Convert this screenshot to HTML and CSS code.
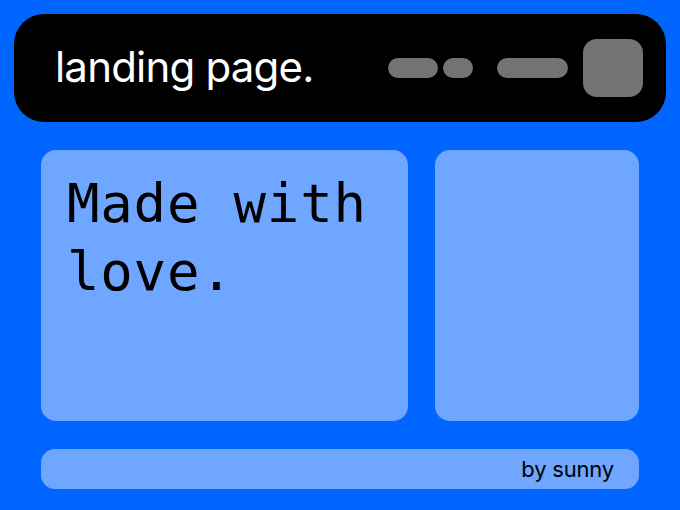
FILE: index.html
```html
<!DOCTYPE html>
<html lang="en">
<head>
<meta charset="utf-8">
<title>landing page.</title>
<link rel="stylesheet" href="styles.css">
</head>
<body>
<div class="page">
  <header class="topbar">
    <div class="brand">landing page.</div>
    <nav class="nav">
      <span class="pill pill-a"></span>
      <span class="pill pill-b"></span>
      <span class="pill pill-c"></span>
      <span class="avatar"></span>
    </nav>
  </header>
  <main class="content">
    <section class="card card-main">
      <p class="tagline">Made with<br>love.</p>
    </section>
    <section class="card card-side"></section>
  </main>
  <footer class="footer">by sunny</footer>
</div>
</body>
</html>
```
FILE: styles.css
```css
html, body {
  margin: 0;
  padding: 0;
  background: #0066ff;
}
.page {
  width: 680px;
  height: 510px;
  box-sizing: border-box;
  padding: 14px;
  display: flex;
  flex-direction: column;
  font-family: Inter, "Noto Sans", sans-serif;
}
.topbar {
  height: 108px;
  background: #000;
  border-radius: 30px;
  display: flex;
  align-items: center;
  justify-content: space-between;
  padding: 0 23px 0 41px;
  box-sizing: border-box;
}
.brand {
  color: #fff;
  font-size: 42px;
  line-height: 48px;
  letter-spacing: -0.8px;
  font-weight: 400;
  margin-top: -2px;
}
.nav {
  display: flex;
  align-items: center;
}
.pill {
  display: block;
  height: 20px;
  border-radius: 10px;
  background: #737373;
}
.pill-a { width: 50px; }
.pill-b { width: 30px; margin-left: 5px; }
.pill-c { width: 71px; margin-left: 24px; }
.avatar {
  display: block;
  width: 60px;
  height: 58px;
  border-radius: 14px;
  background: #737373;
  margin-left: 15px;
}
.content {
  display: grid;
  grid-template-columns: 367px 204px;
  column-gap: 27px;
  margin: 28px 27px 0;
  height: 271px;
}
.card {
  background: #6fa6ff;
  border-radius: 15px;
}
.card-main {
  padding: 20px 26px;
  box-sizing: border-box;
}
.tagline {
  margin: 0;
  font-family: "DejaVu Sans Mono", "Liberation Mono", monospace;
  font-size: 54px;
  line-height: 68px;
  letter-spacing: 0.8px;
  color: #000;
}
.footer {
  margin: 28px 27px 0;
  height: 40px;
  border-radius: 14px;
  background: #6fa6ff;
  display: flex;
  align-items: center;
  justify-content: flex-end;
  padding-right: 25px;
  font-size: 22px;
  color: #000;
  letter-spacing: -0.2px;
}
```
